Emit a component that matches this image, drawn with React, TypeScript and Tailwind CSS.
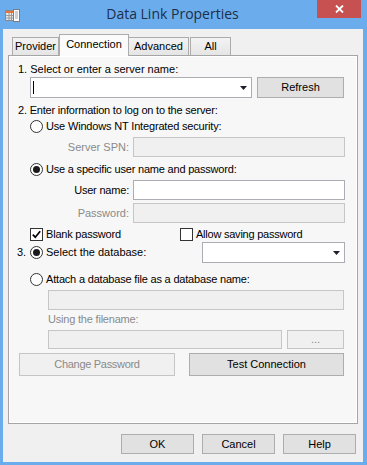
import React from "react";

const Radio = ({ checked }: { checked?: boolean }) => (
  <span className="w-[13px] h-[13px] rounded-full border border-[#333333] bg-white flex items-center justify-center shrink-0">
    {checked && <span className="w-[7px] h-[7px] rounded-full bg-[#1a1a1a]" />}
  </span>
);

const Check = ({ checked }: { checked?: boolean }) => (
  <span className="w-[13px] h-[13px] border border-[#333333] bg-white flex items-center justify-center shrink-0">
    {checked && (
      <svg width="11" height="11" viewBox="0 0 11 11">
        <path d="M1.8 5.6 L4.3 8.2 L9.2 2.2" fill="none" stroke="#000" strokeWidth="1.7" />
      </svg>
    )}
  </span>
);

const Arrow = () => (
  <svg width="7" height="4" viewBox="0 0 7 4">
    <path d="M0 0H7L3.5 4Z" fill="#1e1e2e" />
  </svg>
);

const Input = ({ w, h = 20, disabled }: { w: string; h?: number; disabled?: boolean }) => (
  <div
    className={
      (disabled ? "border-[#c6c6c6] bg-[#f0f0f0] " : "border-[#abadb3] bg-white ") +
      "border shrink-0 " +
      w +
      (h === 19 ? " h-[19px]" : " h-[20px]")
    }
  />
);

const Btn = ({
  label,
  w,
  h,
  disabled,
  tight,
}: {
  label: string;
  w: string;
  h: string;
  disabled?: boolean;
  tight?: boolean;
}) => (
  <div
    className={
      (disabled
        ? "border-[#c5c5c5] bg-[#f0f0f0] text-[#8a8a8a] "
        : "border-[#adadad] bg-[#e1e1e1] text-black ") +
      (tight ? "tracking-[-0.3px] " : "") +
      "border flex items-center justify-center leading-[13px] shrink-0 " +
      w +
      " " +
      h
    }
  >
    {label}
  </div>
);

export default function App() {
  return (
    <div className="w-[367px] h-[465px] bg-[#6badec] flex flex-col overflow-hidden font-['Liberation_Sans',Arial,sans-serif] text-[11px] text-black">
      {/* Title bar */}
      <div className="h-[29px] flex items-start shrink-0">
        <div className="ml-[5px] mt-[9px] w-[15px] h-[13px]">
          <svg width="15" height="13" viewBox="0 0 15 13">
            <rect x="0.5" y="1.5" width="9" height="10" fill="#e8e8e8" stroke="#8a8a8a" />
            <rect x="1" y="2" width="8" height="2" fill="#e8743b" />
            <path d="M1 6.5H9M1 9H9M4 4V11M6.5 4V11" stroke="#9a9a9a" strokeWidth="1" />
            <rect x="8.5" y="0.5" width="6" height="12" fill="#ffffff" stroke="#7d7d7d" />
            <path d="M10 3H13M10 5H13M10 7H13M10 9H13" stroke="#a0a0a0" strokeWidth="1" />
          </svg>
        </div>
        <div className="flex-1 text-center pt-[4px] pl-[8px] leading-[19px] text-[14px] text-[#1c2e4a] font-['Open_Sans','Noto_Sans',sans-serif]">
          Data Link Properties
        </div>
        <div className="w-[44px] h-[18px] mr-[6px] bg-[#c75050] flex items-center justify-center">
          <svg width="9" height="8" viewBox="0 0 9 8">
            <path d="M1 0.5L8 7.5M8 0.5L1 7.5" stroke="#fff" strokeWidth="1.8" />
          </svg>
        </div>
      </div>

      {/* Client area */}
      <div className="ml-[3px] mr-[4px] mb-[3px] flex-1 bg-[#f0f0f0] px-[5px] pt-[5px] flex flex-col">
        {/* Tabs */}
        <div className="h-[21px] flex items-end pl-[4px]">
          <div className="w-[47px] h-[18px] border border-b-0 border-[#acacac] bg-gradient-to-b from-[#f3f3f3] to-[#e5e5e5] flex justify-center pt-[2px] leading-[13px]">
            Provider
          </div>
          <div className="w-[70px] h-[22px] -mb-px relative z-10 border border-b-0 border-[#acacac] bg-[#fbfbfb] flex justify-center pt-[3px] leading-[13px]">
            Connection
          </div>
          <div className="w-[60px] h-[18px] border border-b-0 border-l-0 border-[#acacac] bg-gradient-to-b from-[#f3f3f3] to-[#e5e5e5] flex justify-center pt-[2px] leading-[13px]">
            Advanced
          </div>
          <div className="w-[41px] ml-px h-[18px] border border-b-0 border-[#acacac] bg-gradient-to-b from-[#f3f3f3] to-[#e5e5e5] flex justify-center pt-[2px] leading-[13px]">
            All
          </div>
        </div>

        {/* Panel */}
        <div className="h-[369px] border border-[#a5a5a5] bg-[#f7f7f7] shadow-[inset_1px_1px_0_#ffffff,inset_-1px_-1px_0_#ffffff] flex flex-col">
          <div className="mt-[7px] ml-[9px] h-[13px] leading-[13px]">1. Select or enter a server name:</div>

          <div className="mt-[1px] ml-[21px] flex gap-[5px] h-[21px]">
            <div className="w-[222px] h-[21px] border border-[#abadb3] bg-white flex items-center justify-between pl-[2px] pr-[4px]">
              <span className="w-px h-[13px] bg-black" />
              <Arrow />
            </div>
            <Btn label="Refresh" w="w-[87px]" h="h-[21px]" />
          </div>

          <div className="mt-[6px] ml-[9px] h-[13px] leading-[13px] tracking-[-0.2px]">
            2. Enter information to log on to the server:
          </div>

          <div className="mt-[3px] ml-[21px] h-[13px] flex items-center gap-[3px] leading-[13px]">
            <Radio />
            <span className="tracking-[-0.17px]">Use Windows NT Integrated security:</span>
          </div>

          <div className="mt-[4px] h-[20px] flex items-center justify-end gap-[4px] pr-[12px] leading-[13px]">
            <span className="text-[#8a8a8a]">Server SPN:</span>
            <Input w="w-[212px]" disabled />
          </div>

          <div className="mt-[6px] ml-[21px] h-[13px] flex items-center gap-[3px] leading-[13px]">
            <Radio checked />
            <span className="tracking-[-0.2px]">Use a specific user name and password:</span>
          </div>

          <div className="mt-[4px] h-[20px] flex items-center justify-end gap-[4px] pr-[12px] leading-[13px]">
            <span className="tracking-[-0.2px]">User name:</span>
            <Input w="w-[212px]" />
          </div>

          <div className="mt-[3px] h-[20px] flex items-center justify-end gap-[4px] pr-[12px] leading-[13px]">
            <span className="text-[#8a8a8a]">Password:</span>
            <Input w="w-[212px]" disabled />
          </div>

          <div className="mt-[5px] ml-[21px] h-[13px] flex items-center leading-[13px]">
            <div className="w-[150px] flex items-center gap-[3px]">
              <Check checked />
              <span className="tracking-[-0.2px]">Blank password</span>
            </div>
            <div className="flex items-center gap-[3px]">
              <Check />
              <span className="tracking-[-0.23px]">Allow saving password</span>
            </div>
          </div>

          <div className="mt-[1px] ml-[8px] pr-[12px] h-[21px] flex items-center leading-[13px]">
            <span className="w-[13px]">3.</span>
            <div className="flex items-center gap-[3px]">
              <Radio checked />
              <span>Select the database:</span>
            </div>
            <div className="ml-auto w-[143px] h-[21px] border border-[#abadb3] bg-white flex items-center justify-end pr-[4px]">
              <Arrow />
            </div>
          </div>

          <div className="mt-[10px] ml-[21px] h-[13px] flex items-center gap-[3px] leading-[13px]">
            <Radio />
            <span className="tracking-[-0.19px]">Attach a database file as a database name:</span>
          </div>

          <div className="mt-[4px] ml-[39px]">
            <Input w="w-[296px]" disabled />
          </div>

          <div className="mt-[3px] ml-[39px] h-[13px] leading-[13px] text-[#8a8a8a] tracking-[-0.2px]">
            Using the filename:
          </div>

          <div className="mt-[4px] ml-[39px] flex gap-[5px] h-[19px]">
            <Input w="w-[234px]" h={19} disabled />
            <Btn label="..." w="w-[57px]" h="h-[19px]" disabled />
          </div>

          <div className="mt-[4px] ml-[10px] flex gap-[14px] h-[23px]">
            <Btn label="Change Password" w="w-[156px]" h="h-[23px]" disabled tight />
            <Btn label="Test Connection" w="w-[155px]" h="h-[23px]" />
          </div>
        </div>

        {/* Bottom buttons */}
        <div className="mt-[10px] flex justify-end gap-[8px] pr-[2px]">
          <Btn label="OK" w="w-[73px]" h="h-[20px]" />
          <Btn label="Cancel" w="w-[73px]" h="h-[20px]" />
          <Btn label="Help" w="w-[73px]" h="h-[20px]" />
        </div>
      </div>
    </div>
  );
}
